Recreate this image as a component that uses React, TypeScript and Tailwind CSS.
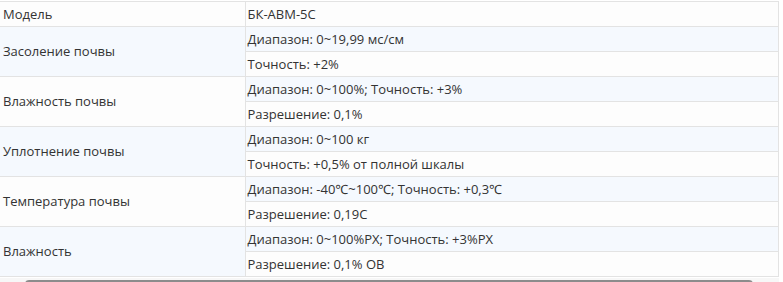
import React from "react";

type Group = { label: string; rows: string[] };

const groups: Group[] = [
  { label: "Засоление почвы", rows: ["Диапазон: 0~19,99 мс/см", "Точность: +2%"] },
  { label: "Влажность почвы", rows: ["Диапазон: 0~100%; Точность: +3%", "Разрешение: 0,1%"] },
  { label: "Уплотнение почвы", rows: ["Диапазон: 0~100 кг", "Точность: +0,5% от полной шкалы"] },
  { label: "Температура почвы", rows: ["Диапазон: -40℃~100℃; Точность: +0,3℃", "Разрешение: 0,19С"] },
  { label: "Влажность", rows: ["Диапазон: 0~100%РХ; Точность: +3%РХ", "Разрешение: 0,1% ОВ"] },
];

export default function App() {
  return (
    <div
      className="w-[783px] h-[282px] overflow-hidden bg-white text-[13px] text-[#333]"
      style={{ fontFamily: '"Open Sans", "Noto Sans", sans-serif' }}
    >
      <div className="pt-px">
        <table className="w-[779px] border-collapse table-fixed">
          <colgroup>
            <col className="w-[245px]" />
            <col />
          </colgroup>
          <tbody>
            <tr className="h-[25px]">
              <td className="border border-[#e3e3e3] border-l-0 bg-[#fdfdfd] px-[3px] leading-none">Модель</td>
              <td className="border border-[#e3e3e3] bg-[#fdfdfd] px-[2px] leading-none">БК-АВМ-5С</td>
            </tr>
            {groups.map((g, gi) => (
              <React.Fragment key={g.label}>
                <tr className="h-[25px]">
                  <td
                    rowSpan={2}
                    className={
                      "border border-[#e3e3e3] border-l-0 px-[3px] leading-none " +
                      (gi % 2 === 0 ? "bg-[#f5f9fe]" : "bg-[#fdfdfd]")
                    }
                  >
                    {g.label}
                  </td>
                  <td className="border border-[#e3e3e3] bg-[#f5f9fe] px-[2px] leading-none">{g.rows[0]}</td>
                </tr>
                <tr className="h-[25px]">
                  <td className="border border-[#e3e3e3] bg-[#fdfdfd] px-[2px] leading-none">{g.rows[1]}</td>
                </tr>
              </React.Fragment>
            ))}
          </tbody>
        </table>
      </div>
      <div className="mt-[1px] flex h-[17px] w-[779px] items-start bg-[#f7f7f7]">
        <div className="flex w-[25px] justify-center pt-[3px]">
          <svg width="8" height="8" viewBox="0 0 8 8">
            <path d="M5 1 L2 4 L5 7 Z" fill="#606060" />
          </svg>
        </div>
        <div className="mt-[2px] h-[10px] flex-1 rounded-sm bg-[#8c8c8c]" />
        <div className="flex w-[26px] justify-center pt-[3px]">
          <svg width="8" height="8" viewBox="0 0 8 8">
            <path d="M3 1 L6 4 L3 7 Z" fill="#606060" />
          </svg>
        </div>
      </div>
    </div>
  );
}
